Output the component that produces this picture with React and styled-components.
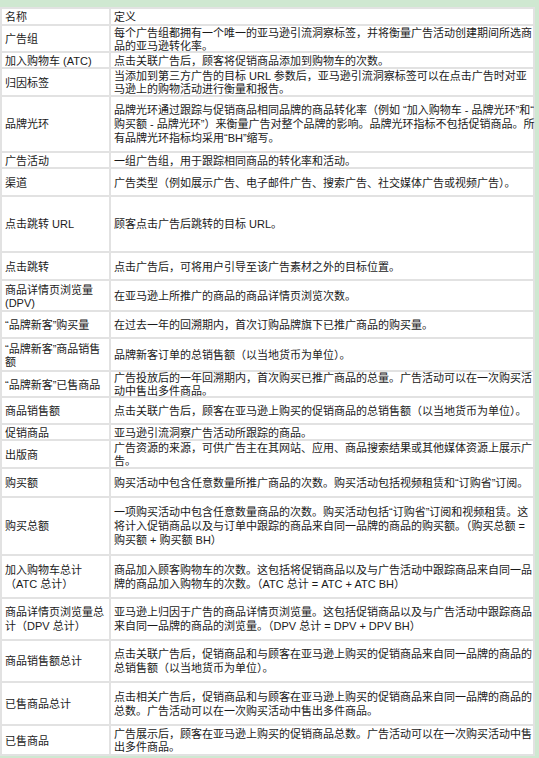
import React from 'react';
import styled, { createGlobalStyle } from 'styled-components';

const GlobalStyle = createGlobalStyle`
	html, body {
		margin: 0;
		padding: 0;
		background: #cfe8d1;
	}
	body {
		font-family: 'Liberation Sans', 'Noto Sans CJK SC', sans-serif;
		font-size: 11px;
		color: #1a1a1a;
	}
`;

const Page = styled.div`
	width: 539px;
	height: 758px;
	overflow: hidden;
	padding-top: 7px;
	box-sizing: border-box;
`;

const Grid = styled.div`
	display: grid;
	grid-template-columns: 107px 422px;
	gap: 2px;
	padding: 2px;
	width: 535px;
	box-sizing: border-box;
	background: #e2e2e2;
`;

const Cell = styled.div`
	background: #ffffff;
	height: ${(p) => p.$h}px;
	display: flex;
	flex-direction: column;
	justify-content: center;
	padding: 0 2px 0 3px;
	line-height: ${(p) => (p.$tight ? 13 : 14)}px;
`;

const Line = styled.span`
	display: block;
	height: ${(p) => (p.$tight ? 13 : 14)}px;
	white-space: nowrap;
`;

const rows = [
	[15, ['名称'], ['定义']],
	[25, ['广告组'], ['每个广告组都拥有一个唯一的亚马逊引流洞察标签，并将衡量广告活动创建期间所选商', '品的亚马逊转化率。']],
	[14, ['加入购物车 (ATC)'], ['点击关联广告后，顾客将促销商品添加到购物车的次数。']],
	[26, ['归因标签'], ['当添加到第三方广告的目标 URL 参数后，亚马逊引流洞察标签可以在点击广告时对亚', '马逊上的购物活动进行衡量和报告。']],
	[54, ['品牌光环'], ['品牌光环通过跟踪与促销商品相同品牌的商品转化率（例如 “加入购物车 - 品牌光环”和“', '购买额 - 品牌光环”）来衡量广告对整个品牌的影响。品牌光环指标不包括促销商品。所', '有品牌光环指标均采用“BH”缩写。']],
	[14, ['广告活动'], ['一组广告组，用于跟踪相同商品的转化率和活动。']],
	[26, ['渠道'], ['广告类型（例如展示广告、电子邮件广告、搜索广告、社交媒体广告或视频广告）。']],
	[54, ['点击跳转 URL'], ['顾客点击广告后跳转的目标 URL。']],
	[26, ['点击跳转'], ['点击广告后，可将用户引导至该广告素材之外的目标位置。']],
	[29, ['商品详情页浏览量', '(DPV)'], ['在亚马逊上所推广的商品的商品详情页浏览次数。']],
	[25, ['“品牌新客”购买量'], ['在过去一年的回溯期内，首次订购品牌旗下已推广商品的购买量。']],
	[31, ['“品牌新客”商品销售', '额'], ['品牌新客订单的总销售额（以当地货币为单位）。']],
	[24, ['“品牌新客”已售商品'], ['广告投放后的一年回溯期内，首次购买已推广商品的总量。广告活动可以在一次购买活', '动中售出多件商品。']],
	[25, ['商品销售额'], ['点击关联广告后，顾客在亚马逊上购买的促销商品的总销售额（以当地货币为单位）。']],
	[14, ['促销商品'], ['亚马逊引流洞察广告活动所跟踪的商品。']],
	[26, ['出版商'], ['广告资源的来源，可供广告主在其网站、应用、商品搜索结果或其他媒体资源上展示广', '告。']],
	[27, ['购买额'], ['购买活动中包含任意数量所推广商品的次数。购买活动包括视频租赁和“订购省”订阅。']],
	[56, ['购买总额'], ['一项购买活动中包含任意数量商品的次数。购买活动包括“订购省”订阅和视频租赁。这', '将计入促销商品以及与订单中跟踪的商品来自同一品牌的商品的购买额。（购买总额 =', '购买额 + 购买额 BH）']],
	[41, ['加入购物车总计', '（ATC 总计）'], ['商品加入顾客购物车的次数。这包括将促销商品以及与广告活动中跟踪商品来自同一品', '牌的商品加入购物车的次数。（ATC 总计 = ATC + ATC BH）']],
	[40, ['商品详情页浏览量总', '计（DPV 总计）'], ['亚马逊上归因于广告的商品详情页浏览量。这包括促销商品以及与广告活动中跟踪商品', '来自同一品牌的商品的浏览量。（DPV 总计 = DPV + DPV BH）']],
	[40, ['商品销售额总计'], ['点击关联广告后，促销商品和与顾客在亚马逊上购买的促销商品来自同一品牌的商品的', '总销售额（以当地货币为单位）。']],
	[41, ['已售商品总计'], ['点击相关广告后，促销商品和与顾客在亚马逊上购买的促销商品来自同一品牌的商品的', '总数。广告活动可以在一次购买活动中售出多件商品。']],
	[28, ['已售商品'], ['广告展示后，顾客在亚马逊上购买的促销商品总数。广告活动可以在一次购买活动中售', '出多件商品。']],
];

const Lines = ({ items, tight }) =>
	items.map((t, j) => (
		<Line key={j} $tight={tight}>
			{t}
		</Line>
	));

const App = () => {
	return (
		<>
			<GlobalStyle />
			<Page>
				<Grid>
					{rows.map(([h, name, def], i) => {
						const tight = h < 40;
						return (
							<React.Fragment key={i}>
								<Cell $h={h}>
									<Lines items={name} tight={tight} />
								</Cell>
								<Cell $h={h}>
									<Lines items={def} tight={tight} />
								</Cell>
							</React.Fragment>
						);
					})}
				</Grid>
			</Page>
		</>
	);
};

export default App;
